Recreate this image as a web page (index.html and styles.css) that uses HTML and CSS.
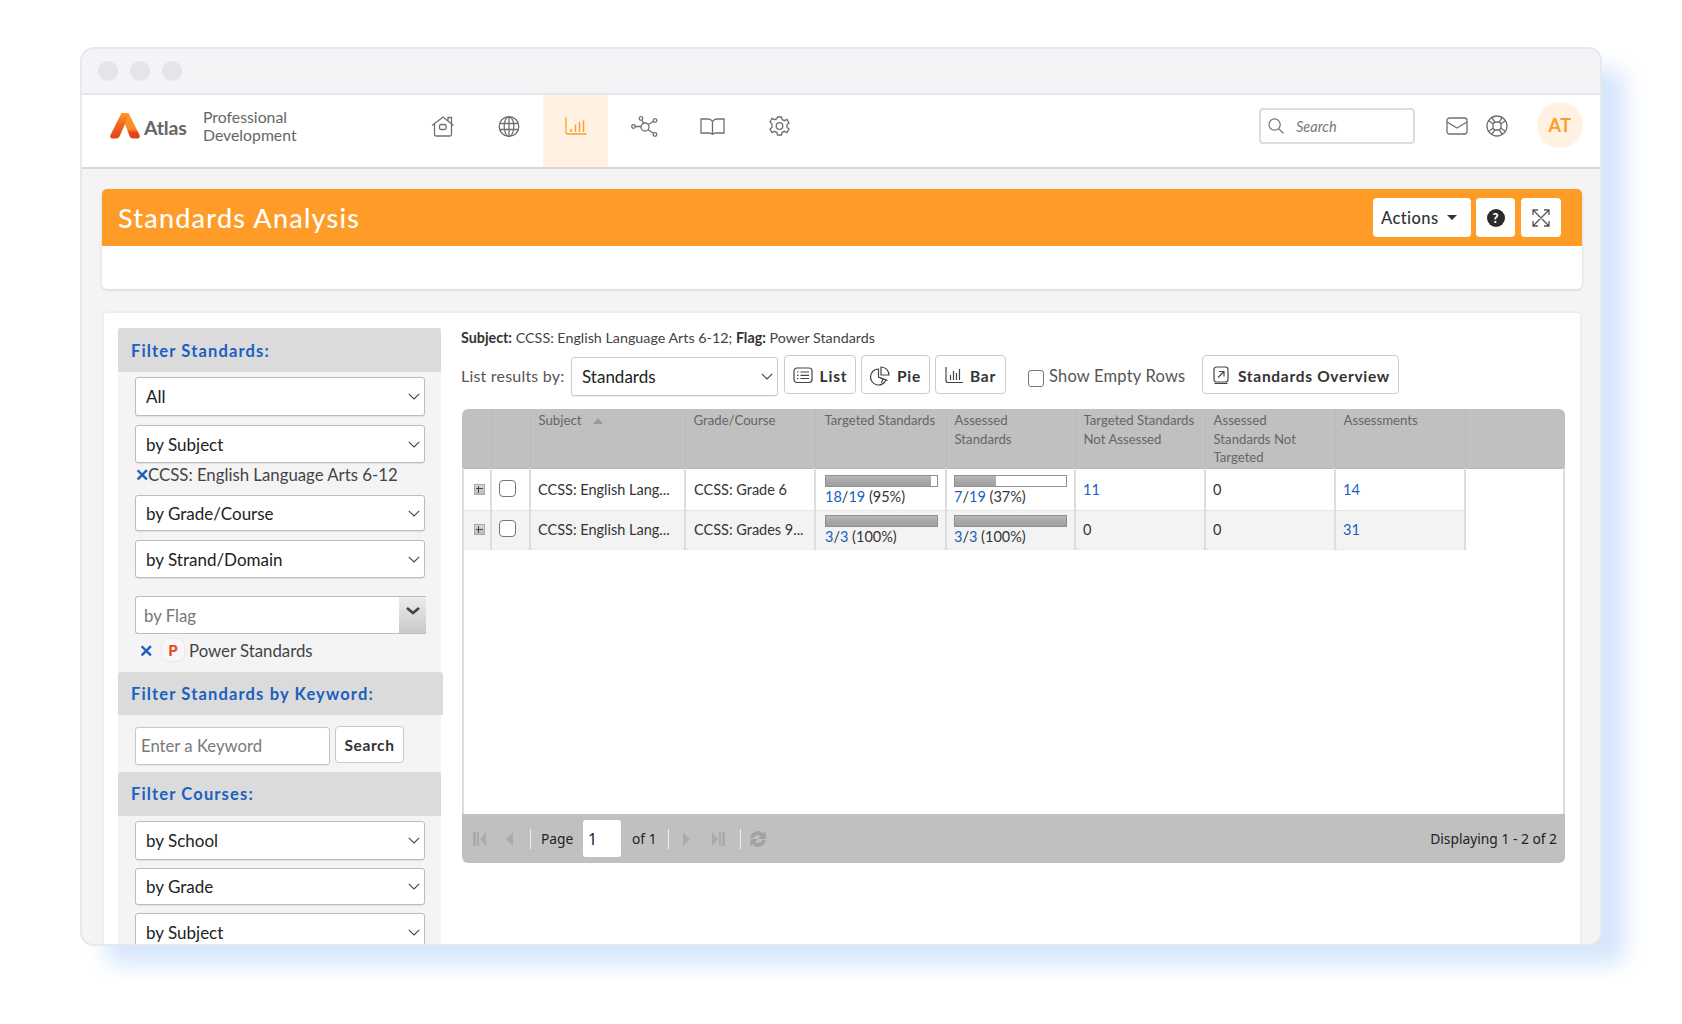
FILE: index.html
```html
<!DOCTYPE html>
<html lang="en">
<head>
<meta charset="utf-8">
<title>Standards Analysis</title>
<link rel="stylesheet" href="styles.css">
</head>
<body>
<div class="window">
  <div class="titlebar"><i class="dot"></i><i class="dot"></i><i class="dot"></i></div>
  <header class="nav">
    <div class="brand">
      <svg class="logo" viewBox="0 0 30 27" width="30" height="27">
        <defs>
          <linearGradient id="lg1" x1="0" y1="0" x2="0" y2="1"><stop offset="0" stop-color="#ff9c28"/><stop offset=".4" stop-color="#f2691f"/><stop offset="1" stop-color="#e2411a"/></linearGradient>
          <linearGradient id="lg2" x1="0" y1="0" x2="0" y2="1"><stop offset="0" stop-color="#ff9c28"/><stop offset=".62" stop-color="#fb8a26"/><stop offset=".8" stop-color="#e2411a"/></linearGradient>
        </defs>
        <path d="M11.500 1h7L29.500 23q1 3.500-2.500 3.500h-4q-2.500 0-3.500-2.500L15 12z" fill="url(#lg2)"/>
        <path d="M11.500 1h7L15 12 9.500 24.500q-1 2-3.500 2H3q-3.500 0-2.500-3.500z" fill="url(#lg1)"/>
      </svg>
      <span class="wordmark">Atlas</span>
      <span class="product">Professional<br>Development</span>
    </div>
    <nav class="tabs">
      <a class="tab home"><svg width="24" height="21" viewBox="0 0 24 21"><path d="M1 9.500 12 1l10.500 8.500M3.500 8v10.500q0 1.500 1.500 1.500h14q1.500 0 1.500-1.500V8M17 4.500V1.500h3.500v6" /><rect x="8.500" y="8.500" width="6.500" height="5" rx="1.500"/></svg></a>
      <a class="tab"><svg width="22" height="21" viewBox="0 0 22 21"><circle cx="11" cy="10.500" r="9.800"/><ellipse cx="11" cy="10.500" rx="4.800" ry="9.800"/><path d="M11 .7v19.600M1.600 7.500h18.800M1.600 13.500h18.800"/></svg></a>
      <a class="tab active"><svg width="22" height="18" viewBox="0 0 22 18"><path d="M1 .5V15q0 2 2 2h18.500"/><path d="M6 15v-3M10.500 15V7.500M14.500 15V5M18.500 15V3.500" stroke-width="1.500"/></svg></a>
      <a class="tab shift"><svg width="27" height="21" viewBox="0 0 27 21"><circle cx="2.500" cy="10.500" r="1.800"/><circle cx="10" cy="2.500" r="1.800"/><circle cx="24" cy="4.500" r="1.800"/><circle cx="24" cy="18.500" r="1.800"/><circle cx="14" cy="11" r="4"/><path d="M4.300 10.500H10M11 4.200l1.500 3M22.500 5.500l-5.500 3M22.500 17.500l-5.500-4"/></svg></a>
      <a class="tab shift2"><svg width="25" height="17" viewBox="0 0 25 17"><path d="M12.500 3.500Q11 1 8 1H1v14h8q2.500 0 3.500 1.300Q13.500 15 16 15h8V1h-7q-3 0-4.500 2.500zM12.500 3.500v12.800"/></svg></a>
      <a class="tab"><svg width="21" height="21" viewBox="0 0 21 21"><path d="M8.500 1h4l.7 2.700 2.300 1 2.500-1.300 2 3.400-2 1.900v2.600l2 1.900-2 3.400-2.500-1.300-2.300 1-.7 2.700h-4l-.7-2.700-2.300-1-2.500 1.300-2-3.400 2-1.900V7.700l-2-1.900 2-3.400 2.500 1.300 2.300-1z"/><circle cx="10.500" cy="10" r="3.300"/></svg></a>
    </nav>
    <div class="search">
      <svg width="16" height="16" viewBox="0 0 17 17"><circle cx="7" cy="7" r="6"/><path d="m11.500 11.500 5 5"/></svg>
      <span>Search</span>
    </div>
    <svg class="mail" width="22" height="18" viewBox="0 0 22 18"><rect x="1" y="1" width="20" height="16" rx="2.500"/><path d="M1 5 11 11l10-6"/></svg>
    <svg class="buoy" width="22" height="22" viewBox="0 0 22 22"><circle cx="11" cy="11" r="10"/><rect x="7" y="7" width="8" height="8" rx="3"/><path d="M5.500 2.500 9 7.200M2.500 5.500 7.200 9M16.500 2.500 13 7.200M19.500 5.500 14.800 9M5.500 19.500 9 14.800M2.500 16.500 7.200 13M16.500 19.500 13 14.800M19.500 16.500 14.800 13"/></svg>
    <div class="avatar">AT</div>
  </header>
  <main class="content">
    <section class="page-head">
      <div class="banner">
        <h1>Standards Analysis</h1>
        <button class="btn-top actions">Actions <i class="caret"></i></button>
        <button class="btn-top help"><span class="help-dot">?</span></button>
        <button class="btn-top expand"><svg width="18" height="18" viewBox="0 0 18 18"><path d="M1.500 1.500l15 15M16.500 1.500l-15 15M1 6V1h5M12 1h5v5M1 12v5h5M12 17h5v-5"/></svg></button>
      </div>
      <div class="banner-body"></div>
    </section>
    <section class="work">
      <aside class="filters">
        <h2 class="filter-head">Filter Standards:</h2>
        <div class="filter-body first">
          <select class="sel h39"><option>All</option></select>
          <select class="sel h38 mt9"><option>by Subject</option></select>
          <div class="chosen"><span class="x">✕</span>CCSS: English Language Arts 6-12</div>
          <select class="sel h36"><option>by Grade/Course</option></select>
          <select class="sel h38 mt9"><option>by Strand/Domain</option></select>
          <div class="combo"><span>by Flag</span><b class="combo-btn"><svg width="14" height="8" viewBox="0 0 14 8"><path d="M1 1l6 5 6-5"/></svg></b></div>
          <div class="flag-row"><span class="x2">✕</span><i class="pflag">P</i>Power Standards</div>
        </div>
        <h2 class="filter-head wide short">Filter Standards by Keyword:</h2>
        <div class="keyword">
          <input class="kw" type="text" placeholder="Enter a Keyword">
          <button class="kw-btn">Search</button>
        </div>
        <h2 class="filter-head">Filter Courses:</h2>
        <div class="filter-body first">
          <select class="sel h39"><option>by School</option></select>
          <select class="sel h37 mt8"><option>by Grade</option></select>
          <select class="sel h39 mt8"><option>by Subject</option></select>
        </div>
      </aside>
      <div class="results">
        <p class="crumb"><b>Subject:</b> CCSS: English Language Arts 6-12; <b>Flag:</b> Power Standards</p>
        <div class="controls">
          <span class="list-by">List results by:</span>
          <select class="sel std"><option>Standards</option></select>
          <button class="tool list"><svg width="20" height="17" viewBox="0 0 20 17"><rect x="1" y="1" width="18" height="14.500" rx="3"/><path d="M4 5h1.500M4 8.300h1.500M4 11.500h1.500M7.500 5H16M7.500 8.300H16M7.500 11.500H16"/></svg>List</button>
          <button class="tool pie"><svg width="20" height="20" viewBox="0 0 20 20"><path d="M8.500 3A8 8 0 1 0 16 14l-7.500-3z"/><path d="M11 1a8 8 0 0 1 8 8h-8z"/><path d="M10.500 12l7 2.500M13 13l-1.500 4"/></svg>Pie</button>
          <button class="tool bar"><svg width="18" height="17" viewBox="0 0 18 17"><path d="M1 0v13.500q0 2 2 2h15"/><path d="M5.500 13V8M8.500 13V4M11.500 13V6M14.500 13V2"/></svg>Bar</button>
          <label class="empty"><input type="checkbox" class="cb">Show Empty Rows</label>
          <button class="tool overview"><svg width="16" height="19" viewBox="0 0 16 19"><rect x="1" y="1" width="14" height="15" rx="2.500"/><path d="M1.500 17.500h13M5 11.500l5.500-5.500M6 5.500h5v5"/></svg>Standards Overview</button>
        </div>
        <div class="grid">
          <div class="grid-body">
            <table class="data">
              <thead>
                <tr>
                  <th class="c1"></th><th class="c2"></th>
                  <th class="c3">Subject <i class="sort"></i></th>
                  <th class="c4">Grade/Course</th>
                  <th class="c5">Targeted Standards</th>
                  <th class="c6">Assessed<br>Standards</th>
                  <th class="c7">Targeted Standards Not Assessed</th>
                  <th class="c8">Assessed<br>Standards Not<br>Targeted</th>
                  <th class="c9">Assessments</th>
                  <th class="c10"></th>
                </tr>
              </thead>
              <tbody>
                <tr class="r1">
                  <td><i class="plus"></i></td><td><input type="checkbox" class="cb row"></td>
                  <td>CCSS: English Lang...</td><td>CCSS: Grade 6</td>
                  <td class="prog"><div class="pbar"><div class="fill" style="width:95%"></div></div><a>18</a>/<a>19</a> (95%)</td>
                  <td class="prog"><div class="pbar"><div class="fill" style="width:37%"></div></div><a>7</a>/<a>19</a> (37%)</td>
                  <td><a>11</a></td><td>0</td><td><a>14</a></td><td class="blank"></td>
                </tr>
                <tr class="r2">
                  <td><i class="plus"></i></td><td><input type="checkbox" class="cb row"></td>
                  <td>CCSS: English Lang...</td><td>CCSS: Grades 9...</td>
                  <td class="prog"><div class="pbar"><div class="fill" style="width:100%"></div></div><a>3</a>/<a>3</a> (100%)</td>
                  <td class="prog"><div class="pbar"><div class="fill" style="width:100%"></div></div><a>3</a>/<a>3</a> (100%)</td>
                  <td>0</td><td>0</td><td><a>31</a></td><td class="blank"></td>
                </tr>
              </tbody>
            </table>
          </div>
          <div class="pager">
            <svg class="pg first" width="15" height="16" viewBox="0 0 15 16"><path d="M1 1h3v14H1zM5 1h2v14H5zM14 1v14L8 8z"/></svg>
            <svg class="pg prev" width="8" height="16" viewBox="0 0 8 16"><path d="M8 1v14L1 8z"/></svg>
            <i class="sep s1"></i>
            <span class="pg-page">Page</span>
            <input class="pg-input" type="text" value="1">
            <span class="pg-of">of 1</span>
            <i class="sep s2"></i>
            <svg class="pg next" width="8" height="16" viewBox="0 0 8 16"><path d="M0 1v14l7-7z"/></svg>
            <svg class="pg last" width="14" height="16" viewBox="0 0 14 16"><path d="M0 1v14l6-7zM7 1h2v14H7zM10 1h3v14h-3z"/></svg>
            <i class="sep s3"></i>
            <svg class="pg refresh" width="22" height="22" viewBox="0 0 20 20"><path d="M3 9a7 7 0 0 1 12-4l2-2v7h-7l2.500-2.500A4 4 0 0 0 6 9z"/><path d="M17 11a7 7 0 0 1-12 4l-2 2v-7h7l-2.500 2.500A4 4 0 0 0 14 11z"/></svg>
            <span class="pg-info">Displaying 1 - 2 of 2</span>
          </div>
        </div>
      </div>
    </section>
  </main>
</div>
</body>
</html>
```

FILE: styles.css
```css
* { box-sizing: border-box; }
html, body { margin: 0; height: 100%; background: #fff; }
body { padding: 47px 0 0 80px; font-family: Lato, "Noto Sans", sans-serif; color: #333; overflow: hidden; }
h1, h2, p { margin: 0; }
button, input, select { font-family: inherit; }

.window {
  width: 1522px; height: 899px; display: flex; flex-direction: column;
  background: #f4f4f5; border: 2px solid #e6e8ec; border-radius: 14px; overflow: hidden;
  box-shadow: 24px 20px 22px -1px #d6e6fd;
}
.titlebar { flex: none; height: 46px; display: flex; align-items: center; gap: 12px; padding: 0 0 0 15.500px; background: #f3f4f6; border-bottom: 2px solid #e6e7ea; }
.dot { width: 20px; height: 20px; border-radius: 50%; background: #e3e5e8; }

.nav { flex: none; height: 74px; display: flex; align-items: flex-start; background: #fff; border-bottom: 2px solid #d8d8d8; }
.brand { width: 327px; height: 70px; display: flex; align-items: flex-start; padding: 16px 0 0 28px; flex: none; }
.logo { margin-top: 1px; flex: none; }
.wordmark { margin: 5px 0 0 4px; font-size: 19.500px; font-weight: 700; color: #666; width: 59px; letter-spacing: -.2px; }
.product { font-size: 15.800px; line-height: 18px; color: #666; margin-top: -3px; }
.tabs { display: flex; gap: 2px; }
.tab { width: 65px; height: 72px; display: flex; align-items: center; justify-content: center; padding-bottom: 10px; }
.tab svg, .search svg, .mail, .buoy { fill: none; stroke: #707070; stroke-width: 1.300; }
.tab.active { background: #fff2e3; }
.tab.active svg { stroke: #ff9c28; }
.tab.home svg { margin-left: 2px; }
.tab.shift { margin-left: 2px; }
.tab.shift2 { margin-left: 1px; }
.search { margin: 13px 0 0 447px; width: 156px; height: 36px; flex: none; display: flex; align-items: center; gap: 12px; padding-left: 7px; border: 2px solid #ddd; border-radius: 4px; font-size: 14.500px; font-style: italic; color: #777; }
.mail { margin: 22px 0 0 31px; flex: none; }
.buoy { margin: 20px 0 0 18px; flex: none; }
.avatar { margin: 7px 0 0 29px; width: 46px; height: 46px; flex: none; border-radius: 50%; background: #fff2e3; color: #ff9c28; font-size: 18px; font-weight: 700; display: flex; align-items: center; justify-content: center; letter-spacing: .5px; }

.content { flex: 1; min-height: 0; padding: 20px 18px 0 20px; display: flex; flex-direction: column; gap: 22px; }
.page-head { flex: none; border-radius: 5px; background: #fff; box-shadow: 0 1px 3px rgba(0,0,0,.15); }
.banner { height: 57px; display: flex; align-items: center; gap: 5px; padding: 0 21px 0 16px; background: #ff9c28; border-radius: 5px 5px 0 0; }
.banner h1 { flex: 1; font-size: 27px; font-weight: 500; color: #fff; letter-spacing: 1.200px; margin-top: -1px; }
.banner-body { height: 43px; }
.btn-top { height: 39px; border: 0; border-radius: 4px; background: #fff; color: #333; display: flex; align-items: center; justify-content: center; padding: 0; }
.actions { width: 98px; font-size: 16.500px; font-weight: 500; letter-spacing: .4px; gap: 8px; justify-content: flex-start; padding-left: 8px; }
.caret { width: 0; height: 0; border: 5px solid transparent; border-top: 5px solid #333; border-bottom: 0; }
.help { width: 39px; margin-right: 1px; }
.expand { width: 40px; }
.expand svg { fill: none; stroke: #555; stroke-width: 1.300; }
.help-dot { width: 18px; height: 18px; border-radius: 50%; background: #2b2b2b; color: #fff; font-size: 13px; font-weight: 900; display: flex; align-items: center; justify-content: center; }

.work { flex: 1; min-height: 0; display: flex; gap: 20px; padding: 15px 15px 0 14px; background: #fff; border: 2px solid #eee; border-bottom: 0; border-radius: 5px 5px 0 0; }
.filters { width: 323px; flex: none; background: #f4f4f4; align-self: flex-start; }
.filter-head { height: 44px; padding: 0 13px; background: #dbdbdb; border-radius: 3px 3px 0 0; font-size: 16.500px; font-weight: 700; color: #1a60c0; letter-spacing: 1.150px; line-height: 45px; }
.filter-head:first-child { line-height: 47px; }
.filter-head.wide { margin-right: -2px; }
.filter-head.short { height: 43px; line-height: 45px; }
.filter-body { display: flex; flex-direction: column; padding: 5px 16px 0 17px; }
.sel {
  appearance: none; width: 100%; padding: 0 28px 0 10px; background: #fff url("data:image/svg+xml,%3Csvg xmlns='http://www.w3.org/2000/svg' width='12' height='7'%3E%3Cpath d='M.8.800 6 6 11.200.800' fill='none' stroke='%23444' stroke-width='1.100'/%3E%3C/svg%3E") no-repeat right 4px center;
  border: 1px solid #bdbdbd; border-radius: 3px; font-size: 17px; color: #222; box-shadow: 0 1px 1px rgba(0,0,0,.08);
}
.h39 { height: 39px; } .h38 { height: 38px; } .h37 { height: 37px; } .h36 { height: 36px; }
.mt9 { margin-top: 9px; } .mt8 { margin-top: 8px; }
.chosen { height: 32px; line-height: 24px; font-size: 16.800px; color: #444; white-space: nowrap; }
.x { display: inline-block; width: 13px; color: #1a60c0; font-size: 17px; font-weight: 700; }
.combo { height: 38px; margin: 18px -1px 0 0; display: flex; align-items: center; justify-content: space-between; padding-left: 8px; background: #fff; border: 1px solid #bdbdbd; border-right: 0; border-radius: 3px 0 0 3px; font-size: 16.800px; color: #777; }
.combo-btn { width: 27px; height: 100%; display: flex; justify-content: center; padding-top: 10px; background: linear-gradient(#ececec, #c9c9c9); }
.combo-btn svg { fill: none; stroke: #444; stroke-width: 2.600; }
.flag-row { height: 38px; display: flex; align-items: center; padding: 0 0 6px 4px; font-size: 16.800px; color: #444; }
.x2 { color: #1a60c0; font-size: 17px; font-weight: 700; width: 23px; }
.pflag { width: 22px; height: 22px; margin-right: 5px; border-radius: 6px; background: #f7f7f7; box-shadow: 0 0 2px rgba(0,0,0,.14); color: #e8491d; font-style: normal; font-weight: 900; font-size: 15px; display: flex; align-items: center; justify-content: center; }
.keyword { height: 57px; display: flex; align-items: flex-start; gap: 5px; padding: 11px 0 0 17px; }
.kw { width: 195px; height: 38px; margin-top: 1px; padding: 0 5px; border: 1px solid #c8c8c8; border-radius: 3px; background: #fff; font-size: 16.700px; box-shadow: 0 1px 1px rgba(0,0,0,.06); }
.kw::placeholder { color: #7a7a7a; opacity: 1; }
.kw-btn { width: 69px; height: 37px; border: 1px solid #c8c8c8; border-radius: 4px; background: #fff; font-size: 15.500px; font-weight: 700; color: #333; letter-spacing: .6px; padding: 0; }

.results { flex: 1; min-width: 0; }
.crumb { height: 20px; margin-top: 0; font-size: 14.300px; line-height: 20px; color: #444; white-space: nowrap; }
.crumb b { font-weight: 700; color: #333; }
.controls { height: 41px; margin-top: 7px; display: flex; align-items: flex-start; }
.list-by { width: 110px; flex: none; line-height: 41px; font-size: 16px; color: #555; letter-spacing: .2px; }
.sel.std { width: 207px; height: 39px; margin-top: 2px; flex: none; border-color: #ccc; }
.tool { height: 39px; display: flex; align-items: center; justify-content: center; gap: 7px; padding: 2px 0 0; border: 1px solid #ccc; border-radius: 4px; background: #fff; font-size: 15.500px; font-weight: 700; color: #333; letter-spacing: .8px; flex: none; }
.tool svg { fill: none; stroke: #444; stroke-width: 1.200; flex: none; }
.list { width: 72px; margin-left: 6px; }
.pie { width: 69px; margin-left: 5px; }
.bar { width: 71px; margin-left: 5px; }
.overview { width: 197px; gap: 9px; letter-spacing: .7px; padding-left: 2px; }
.empty { width: 174px; flex: none; margin-left: 22px; display: flex; align-items: center; height: 41px; gap: 5px; font-size: 16.500px; color: #555; letter-spacing: .2px; }
.cb { appearance: none; margin: 0; flex: none; width: 16px; height: 17px; background: #fff; border: 1px solid #777; border-radius: 3px; }
.empty .cb { margin-top: 5px; }

.grid { height: 454px; margin-top: 13px; margin-left: 1px; display: flex; flex-direction: column; }
.grid-body { flex: 1; min-height: 0; position: relative; background: #fff; border-radius: 6px 6px 0 0; overflow: hidden; }
.grid-body::after { content: ""; position: absolute; top: 59px; right: 0; bottom: 0; left: 0; border-left: 2px solid #ddd; border-right: 2px solid #ddd; pointer-events: none; }
.data { width: 100%; table-layout: fixed; border-collapse: collapse; font-size: 14.500px; color: #333; }
.data th { height: 59px; vertical-align: top; text-align: left; padding: 2px 8px 0; background: #c0c0c0; border-right: 1px solid #bababa; border-bottom: 1px solid #b5b5b5; font-size: 13.200px; line-height: 18.500px; font-weight: 400; color: #666; }
.c1 { width: 29px; } .c2 { width: 39px; } .c3 { width: 155px; } .c4 { width: 130px; } .c5 { width: 131px; } .c6 { width: 129px; } .c7 { width: 130px; } .c8 { width: 130px; } .c9 { width: 130px; }
.data th.c5 { padding-left: 9px; }
.data th.c10 { border-right: 0; }
.data td { padding: 0 7px; border-right: 2px solid #ddd; border-bottom: 1px dotted #ddd; white-space: nowrap; line-height: 17px; vertical-align: middle; }
.data td:nth-child(-n+2) { padding: 0; text-align: center; }
.data td:nth-child(4) { padding-left: 8px; }
.data td:nth-child(5) { padding-left: 9px; }
.data td.blank { background: #fff; border: 0; }
.r1 td { height: 42px; }
.r2 td { height: 39px; background: #f3f3f3; }
.data td.prog { vertical-align: top; }
.r1 td.prog { padding-top: 6px; }
.r2 td.prog { padding-top: 4px; }
.data a { color: #1a5fbf; }
.pbar { height: 12px; width: 113px; margin-bottom: 1px; border: 1px solid #8f8f8f; background: #fff; }
.fill { height: 100%; background: linear-gradient(#b8b8b8, #a8a8a8 50%, #a0a0a0); }
.plus { display: inline-block; width: 11px; height: 11px; background: linear-gradient(#d8d8d8, #bbb); border: 1px solid #aaa; position: relative; vertical-align: middle; margin: -3px 0 0 6.500px; }
.plus::before { content: ""; position: absolute; left: 1px; right: 1px; top: 3.500px; height: 1px; background: #444; }
.plus::after { content: ""; position: absolute; top: 1px; bottom: 1px; left: 3.500px; width: 1px; background: #444; }
.cb.row { vertical-align: middle; width: 17px; height: 17px; margin: -5px 6px 0 0; border-radius: 4px; }
.sort { display: inline-block; width: 0; height: 0; margin-left: 8px; border: 5px solid transparent; border-bottom: 6px solid #9a9a9a; border-top: 0; vertical-align: 1px; }

.pager { flex: none; height: 49px; display: flex; align-items: center; padding: 0 8px 0 10px; margin-left: 0; background: #c0c0c0; border-radius: 0 0 6px 6px; font-size: 13.800px; font-family: "Noto Sans", sans-serif; color: #222; }
.pg { fill: #ababab; flex: none; }
.prev { margin-left: 18px; }
.sep { width: 1px; height: 20px; background: #f0f0f0; flex: none; }
.s1 { margin-left: 17px; }
.pg-page { margin-left: 10px; width: 42px; }
.pg-input { width: 38px; height: 37px; border: 0; border-radius: 3px; background: #fff; font-size: 16px; padding: 0 5px; color: #222; }
.pg-of { margin-left: 11px; width: 36px; }
.next { margin-left: 14px; }
.last { margin-left: 21px; }
.s3 { margin-left: 14px; }
.refresh { margin-left: 6px; fill: #a2a2a2; }
.pg-info { margin-left: auto; }
```
